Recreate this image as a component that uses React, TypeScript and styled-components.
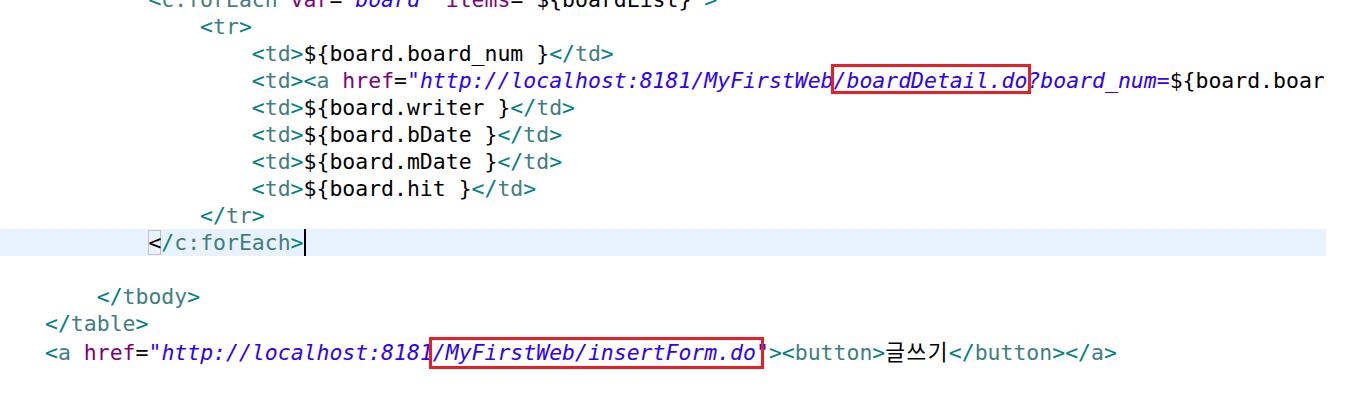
import React from 'react';
import styled, { createGlobalStyle } from 'styled-components';

const GlobalStyle = createGlobalStyle`
  html, body {
    margin: 0;
    padding: 0;
    background: #ffffff;
    overflow: hidden;
  }
`;

const Page = styled.div`
  width: 1352px;
  height: 404px;
  overflow: hidden;
  background: #ffffff;
`;

const Editor = styled.div`
  width: 1326px;
  margin-top: -14px;
  overflow: hidden;
  font-family: 'DejaVu Sans Mono', 'Noto Sans CJK KR', monospace;
  font-size: 21.48px;
  color: #000000;
`;

const Line = styled.div<{ $current?: boolean }>`
  height: 27px;
  line-height: 27px;
  padding-left: 45px;
  white-space: pre;
  background: ${(p) => (p.$current ? '#e8f2fe' : 'transparent')};
`;

const Delim = styled.span`
  color: #008080;
`;

const TagName = styled.span`
  color: #3f7f7f;
`;

const Attr = styled.span`
  color: #7f007f;
`;

const Value = styled.span`
  color: #2a00ff;
  font-style: italic;
`;

const Hangul = styled.span`
  font-family: 'Noto Sans CJK KR', sans-serif;
  font-size: 21.5px;
  letter-spacing: 1.4px;
`;

// red annotation box drawn over the text
const Marked = styled.span<{ $inset: string }>`
  position: relative;

  &::after {
    content: '';
    position: absolute;
    inset: ${(p) => p.$inset};
    border: 3px solid #e81f27;
    pointer-events: none;
  }
`;

const MatchBracket = styled.span`
  box-shadow: inset 0 0 0 1px #c0c0c0;
`;

const Caret = styled.span`
  display: inline-block;
  width: 2px;
  height: 27px;
  margin-right: -2px;
  vertical-align: top;
  background: #000000;
`;

const Open: React.FC<{ name: string }> = ({ name }) => (
  <>
    <Delim>&lt;</Delim>
    <TagName>{name}</TagName>
    <Delim>&gt;</Delim>
  </>
);

const Close: React.FC<{ name: string }> = ({ name }) => (
  <>
    <Delim>&lt;/</Delim>
    <TagName>{name}</TagName>
    <Delim>&gt;</Delim>
  </>
);

const indent = (n: number) => ' '.repeat(n * 4);

const TdLine: React.FC<{ field: string }> = ({ field }) => (
  <Line>
    {indent(4)}
    <Open name="td" />
    {'${board.' + field + ' }'}
    <Close name="td" />
  </Line>
);

export default function App() {
  return (
    <Page>
      <GlobalStyle />
      <Editor>
        <Line>
          {indent(2)}
          <Delim>&lt;</Delim>
          <TagName>c:forEach</TagName> <Attr>var</Attr>=<Value>"board"</Value> <Attr>items</Attr>=
          <Value>"</Value>
          {'${boardList}'}
          <Value>"</Value>
          <Delim>&gt;</Delim>
        </Line>
        <Line>
          {indent(3)}
          <Open name="tr" />
        </Line>
        <TdLine field="board_num" />
        <Line>
          {indent(4)}
          <Open name="td" />
          <Delim>&lt;</Delim>
          <TagName>a</TagName> <Attr>href</Attr>=
          <Value>
            "http://localhost:8181/MyFirstWeb
            <Marked $inset="-4px -4px -1px -3px">/boardDetail.do</Marked>
            ?board_num=
          </Value>
          {'${board.board_num }'}
          <Value>"</Value>
          <Delim>&gt;</Delim>
          {'${board.title }'}
          <Close name="a" />
          <Close name="td" />
        </Line>
        <TdLine field="writer" />
        <TdLine field="bDate" />
        <TdLine field="mDate" />
        <TdLine field="hit" />
        <Line>
          {indent(3)}
          <Close name="tr" />
        </Line>
        <Line $current>
          {indent(2)}
          <MatchBracket>&lt;</MatchBracket>
          <Delim>/</Delim>
          <TagName>c:forEach</TagName>
          <Delim>&gt;</Delim>
          <Caret />
        </Line>
        <Line />
        <Line>
          {indent(1)}
          <Close name="tbody" />
        </Line>
        <Line>
          <Close name="table" />
        </Line>
        <Line>
          <Delim>&lt;</Delim>
          <TagName>a</TagName> <Attr>href</Attr>=
          <Value>
            "http://localhost:8181
            <Marked $inset="-3px -8px -4px -4px">/MyFirstWeb/insertForm.do</Marked>"
          </Value>
          <Delim>&gt;</Delim>
          <Open name="button" />
          <Hangul>글쓰기</Hangul>
          <Close name="button" />
          <Close name="a" />
        </Line>
        <Line />
        <Line />
      </Editor>
    </Page>
  );
}
